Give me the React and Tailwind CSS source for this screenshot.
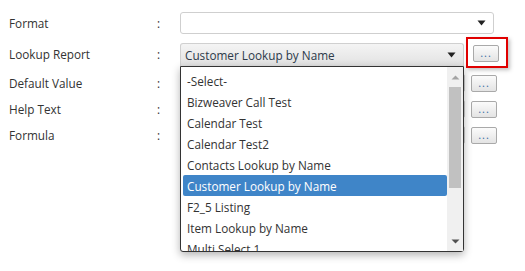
import React from "react";

const items = [
  "-Select-",
  "Bizweaver Call Test",
  "Calendar Test",
  "Calendar Test2",
  "Contacts Lookup by Name",
  "Customer Lookup by Name",
  "F2_5 Listing",
  "Item Lookup by Name",
  "Multi Select 1",
];

function Caret({ className = "" }) {
  return (
    <svg width="9" height="6" viewBox="0 0 9 6" className={className}>
      <path d="M0.5 0.5 L8.5 0.5 L4.5 5.5 Z" fill="#222" />
    </svg>
  );
}

function DotsButton({ className = "" }) {
  return (
    <div
      className={
        "flex h-[17px] w-[26px] items-center justify-center rounded-[2px] border border-[#a9a9a9] bg-gradient-to-b from-[#fbfbfb] to-[#e4e4e4] " +
        className
      }
    >
      <span className="text-[11px] leading-none tracking-[1px] text-[#3a6ea5] -mt-[2px]">...</span>
    </div>
  );
}

function Label({ children }) {
  return (
    <div className="flex w-[180px] shrink-0 items-center pt-[1px]">
      <span className="w-[157px] pl-[9px]">{children}</span>
      <span>:</span>
    </div>
  );
}

export default function App() {
  return (
    <div
      className="relative h-[271px] w-[525px] overflow-hidden bg-white text-[11.75px] text-[#333]"
      style={{ fontFamily: '"Open Sans", "Noto Sans", sans-serif' }}
    >
      <div className="flex flex-col pt-[12px]">
        {/* Format */}
        <div className="flex h-[22px] items-center">
          <Label>Format</Label>
          <div className="flex h-[22px] w-[314px] items-center justify-end rounded-[3px] border border-[#cfcfcf] bg-white pr-[7px]">
            <Caret />
          </div>
        </div>
        {/* Lookup Report */}
        <div className="mt-[9px] flex h-[23px] items-center">
          <Label>Lookup Report</Label>
          <div className="flex h-[23px] w-[284px] items-center justify-between rounded-t-[3px] border border-b-0 border-[#d0d0d0] bg-gradient-to-b from-[#f4f4f4] to-[#e2e2e2] pl-[4px] pr-[7px]">
            <span className="pt-[1px] text-[#2d3a4a]">Customer Lookup by Name</span>
            <Caret />
          </div>
          <div className="ml-[9px] mt-[-3px]">
            <DotsButton />
          </div>
        </div>
        {/* Default Value */}
        <div className="mt-[8px] flex h-[18px] items-center">
          <Label>Default Value</Label>
          <div className="h-[18px] w-[285px] rounded-[2px] border border-[#cfcfcf]" />
          <DotsButton className="ml-[6px]" />
        </div>
        {/* Help Text */}
        <div className="mt-[8px] flex h-[18px] items-center">
          <Label>Help Text</Label>
          <div className="h-[18px] w-[285px] rounded-[2px] border border-[#cfcfcf]" />
          <DotsButton className="ml-[6px]" />
        </div>
        {/* Formula */}
        <div className="mt-[8px] flex h-[18px] items-center">
          <Label>Formula</Label>
          <div className="h-[18px] w-[285px] rounded-[2px] border border-[#cfcfcf]" />
          <DotsButton className="ml-[6px]" />
        </div>
      </div>

      {/* red highlight */}
      <div className="absolute left-[466px] top-[37px] h-[31px] w-[42px] border-2 border-[#e00000] shadow-[2px_2px_4px_rgba(0,0,0,0.25)]" />

      {/* dropdown list */}
      <div className="absolute left-[180px] top-[66px] flex h-[186px] w-[284px] rounded-b-[3px] border border-[#333] bg-white shadow-[0_3px_8px_rgba(0,0,0,0.3)]">
        <div className="flex flex-1 flex-col overflow-hidden pl-[2px] pt-[3px]">
          {items.map((it) => (
            <div
              key={it}
              className={
                "h-[21px] shrink-0 rounded-[2px] pl-[4px] pt-[1px] leading-[21px] " +
                (it === "Customer Lookup by Name" ? "bg-[#3f85c8] text-white" : "text-[#333]")
              }
            >
              {it}
            </div>
          ))}
        </div>
        <div className="flex w-[16px] shrink-0 flex-col items-center bg-[#f0f0f0]">
          <div className="flex h-[20px] items-center justify-center">
            <svg width="9" height="5" viewBox="0 0 9 5">
              <path d="M0.5 4.5 L8.5 4.5 L4.5 0.5 Z" fill="#a3a3a3" />
            </svg>
          </div>
          <div className="h-[101px] w-[12px] bg-[#c1c1c1]" />
          <div className="flex-1" />
          <div className="flex h-[20px] items-center justify-center">
            <svg width="9" height="5" viewBox="0 0 9 5">
              <path d="M0.5 0.5 L8.5 0.5 L4.5 4.5 Z" fill="#505050" />
            </svg>
          </div>
        </div>
      </div>
    </div>
  );
}
